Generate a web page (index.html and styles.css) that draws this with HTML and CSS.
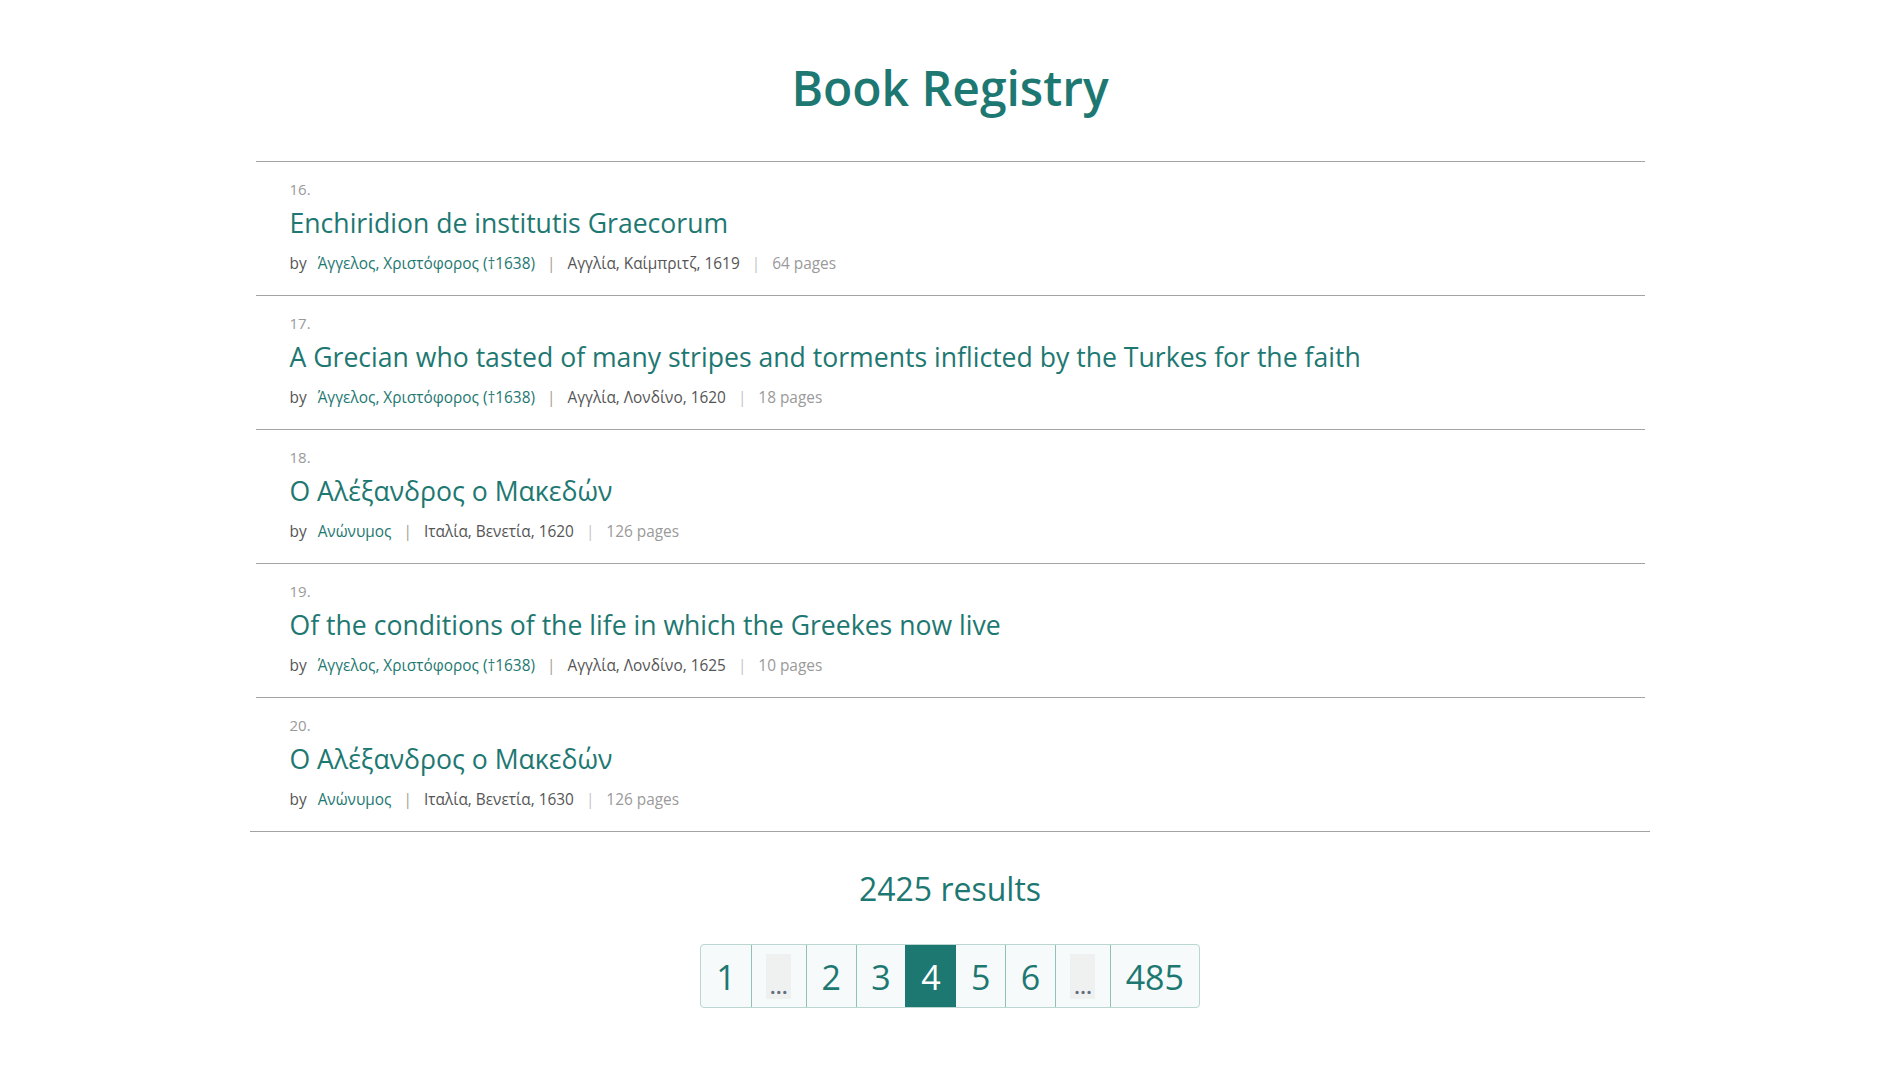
FILE: index.html
```html
<!DOCTYPE html>
<html lang="en">
<head>
<meta charset="utf-8">
<title>Book Registry</title>
<link rel="stylesheet" href="styles.css">
</head>
<body>
<main class="page">
  <h1 class="page-title">Book Registry</h1>
  <ol class="book-list">
    <li class="book">
      <div class="book-num">16.</div>
      <a class="book-title" href="#">Enchiridion de institutis Graecorum</a>
      <div class="book-meta"><span class="by">by</span><a class="author" href="#">Άγγελος, Χριστόφορος (†1638)</a><span class="sep sep-dark">|</span><span class="place">Αγγλία, Καίμπριτζ, 1619</span><span class="sep">|</span><span class="pages">64 pages</span></div>
    </li>
    <li class="book">
      <div class="book-num">17.</div>
      <a class="book-title" href="#">A Grecian who tasted of many stripes and torments inflicted by the Turkes for the faith</a>
      <div class="book-meta"><span class="by">by</span><a class="author" href="#">Άγγελος, Χριστόφορος (†1638)</a><span class="sep sep-dark">|</span><span class="place">Αγγλία, Λονδίνο, 1620</span><span class="sep">|</span><span class="pages">18 pages</span></div>
    </li>
    <li class="book">
      <div class="book-num">18.</div>
      <a class="book-title" href="#">Ο Αλέξανδρος ο Μακεδών</a>
      <div class="book-meta"><span class="by">by</span><a class="author" href="#">Ανώνυμος</a><span class="sep sep-dark">|</span><span class="place">Ιταλία, Βενετία, 1620</span><span class="sep">|</span><span class="pages">126 pages</span></div>
    </li>
    <li class="book">
      <div class="book-num">19.</div>
      <a class="book-title" href="#">Of the conditions of the life in which the Greekes now live</a>
      <div class="book-meta"><span class="by">by</span><a class="author" href="#">Άγγελος, Χριστόφορος (†1638)</a><span class="sep sep-dark">|</span><span class="place">Αγγλία, Λονδίνο, 1625</span><span class="sep">|</span><span class="pages">10 pages</span></div>
    </li>
    <li class="book">
      <div class="book-num">20.</div>
      <a class="book-title" href="#">Ο Αλέξανδρος ο Μακεδών</a>
      <div class="book-meta"><span class="by">by</span><a class="author" href="#">Ανώνυμος</a><span class="sep sep-dark">|</span><span class="place">Ιταλία, Βενετία, 1630</span><span class="sep">|</span><span class="pages">126 pages</span></div>
    </li>
  </ol>
  <hr class="list-end">
  <p class="results">2425 results</p>
  <nav class="pager">
    <a class="pg" href="#">1</a>
    <span class="pg pg-gap"><span class="dots">...</span></span>
    <a class="pg" href="#">2</a>
    <a class="pg" href="#">3</a>
    <a class="pg pg-active" href="#">4</a>
    <a class="pg" href="#">5</a>
    <a class="pg" href="#">6</a>
    <span class="pg pg-gap"><span class="dots">...</span></span>
    <a class="pg" href="#">485</a>
  </nav>
</main>
</body>
</html>
```

FILE: styles.css
```css
html, body {
  margin: 0;
  padding: 0;
  background: #ffffff;
}

body {
  font-family: "Segoe UI", "Open Sans", "Noto Sans", sans-serif;
  color: #444;
}

.page {
  display: flex;
  flex-direction: column;
  align-items: center;
}

.page-title {
  margin: 55px 0 40px;
  font-size: 48px;
  line-height: 66px;
  font-weight: 600;
  color: #1e7872;
}

.book-list {
  list-style: none;
  margin: 0;
  padding: 0;
  width: 1389px;
}

.book {
  border-top: 1px solid #a3a3a3;
  padding: 17px 34px 20px;
  display: flex;
  flex-direction: column;
  align-items: flex-start;
}

.book-num {
  font-size: 15px;
  line-height: 20px;
  color: #9a9a9a;
}

.book-title {
  margin-top: 6px;
  font-size: 26.6px;
  line-height: 37px;
  color: #1e7872;
  text-decoration: none;
}

.book-meta {
  margin-top: 11px;
  font-size: 15.4px;
  line-height: 22px;
  display: flex;
  align-items: baseline;
}

.by {
  color: #555;
  margin-right: 11px;
}

.author {
  color: #1e7872;
  text-decoration: none;
}

.place {
  color: #555;
}

.sep {
  color: #c4c4c4;
  margin: 0 12px;
}

.sep-dark {
  color: #a89c8e;
}

.pages {
  color: #9a9a9a;
}

.list-end {
  width: 1400px;
  margin: 0;
  border: 0;
  border-top: 1px solid #a3a3a3;
  height: 0;
}

.results {
  margin: 35px 0 33px;
  font-size: 32px;
  line-height: 44px;
  color: #1e7872;
}

.pager {
  display: flex;
  border: 1px solid #b9d6d3;
  border-radius: 4px;
  background: #f7fafa;
  height: 62px;
}

.pg {
  display: flex;
  align-items: center;
  justify-content: center;
  padding: 2px 14.7px 0;
  font-size: 34px;
  color: #1e7872;
  text-decoration: none;
  border-left: 1px solid #91bfba;
}

.pg:first-child {
  border-left: 0;
  padding: 2px 15px 0 15px;
}

.pg-active {
  background: #1e7872;
  color: #ffffff;
  border-left-color: #1e7872;
}

.pg-active + .pg {
  border-left-color: #1e7872;
}

.pg-gap {
  padding: 0 14.5px;
  align-items: center;
}

.dots {
  display: flex;
  align-items: flex-end;
  justify-content: center;
  width: 25px;
  height: 45px;
  background: #eff1f1;
  color: #5f6f80;
  font-size: 22px;
  line-height: 20px;
  padding-bottom: 4px;
  box-sizing: border-box;
  font-weight: 600;
}
```
